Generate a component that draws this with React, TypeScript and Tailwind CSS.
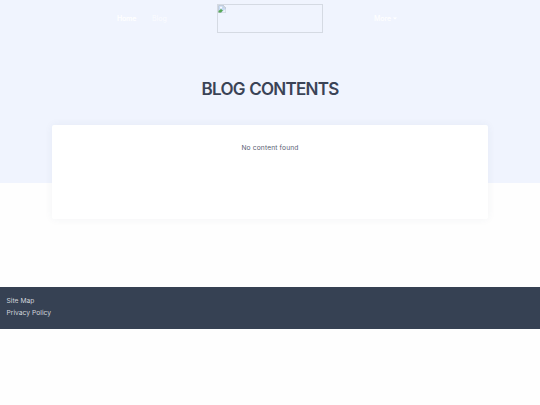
import React from "react";

function BrokenImage() {
  return (
    <div className="h-[29px] w-[106px] border border-[#d5dae3]">
      <svg width="8" height="8" viewBox="0 0 16 16" className="block">
        <path d="M1 1h10l4 4v10H1z" fill="#c8daf3" stroke="#a9b2bd" />
        <path d="M11 1v4h4z" fill="#fff" stroke="#b5bdc8" />
        <circle cx="6" cy="5" r="2" fill="#fff" />
        <path d="M1 15v-3l5-4 4 3-4 4z" fill="#58a856" />
        <path d="M7 15l8-7v7z" fill="#eef3fa" />
      </svg>
    </div>
  );
}

function Header() {
  return (
    <header className="flex h-9 items-start pt-1 text-[7px] leading-none text-white">
      <nav className="flex w-[217px] gap-[17px] pt-[11px] pl-[117px]">
        <a className="w-[18px] font-semibold tracking-[-0.2px]">Home</a>
        <a className="opacity-80">Blog</a>
      </nav>
      <BrokenImage />
      <nav className="flex items-center gap-[3px] pt-[11px] pl-[51px]">
        <a className="w-4 font-medium tracking-[-0.1px]">More</a>
        <svg width="4" height="3" viewBox="0 0 4 3">
          <path d="M0 .5h4L2 2.5z" fill="#fff" />
        </svg>
      </nav>
    </header>
  );
}

export default function App() {
  return (
    <div className="min-h-screen bg-[#fefefe] font-['Inter',sans-serif]">
      <section className="h-[183px] bg-[#f0f4fe]">
        <Header />
        <h1 className="pt-[41px] text-center text-[17px] leading-6 font-semibold tracking-[-0.75px] [word-spacing:1px] text-[#3a4356]">
          BLOG CONTENTS
        </h1>
      </section>
      <main className="relative mx-auto -mt-[58px] h-[94px] w-[436px] rounded-xs bg-white pt-[18px] text-center text-[6.7px] leading-[10px] tracking-[0.13px] text-[#596073] shadow-[0_0_8px_rgba(45,60,110,0.06)]">
        No content found
      </main>
      <footer className="mt-[68px] flex h-[41.5px] flex-col bg-[#364153] pt-[9px] pl-[6.5px] text-[6.7px] leading-[11.5px] tracking-[0.02px] text-[#d1d5dc]">
        <a>Site Map</a>
        <a>Privacy Policy</a>
      </footer>
    </div>
  );
}
